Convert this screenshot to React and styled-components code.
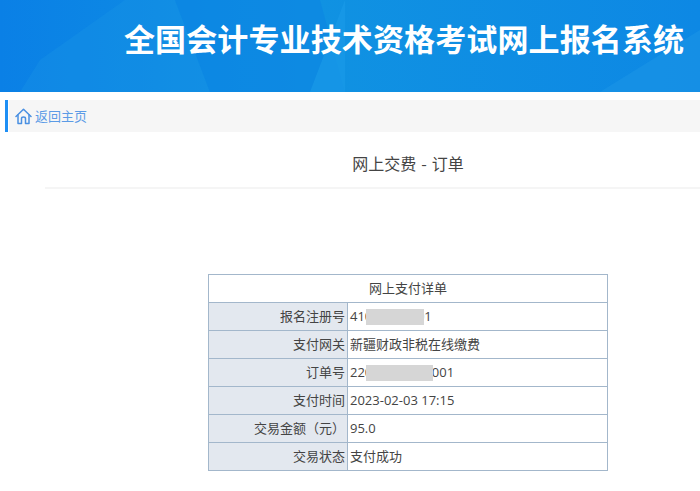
import React from "react";
import styled, { createGlobalStyle } from "styled-components";

const Global = createGlobalStyle`
  html, body { margin: 0; padding: 0; background: #fff; }
  body { font-family: "Open Sans", "Noto Sans CJK SC", sans-serif; color: #444; overflow: hidden; }
`;
const Page = styled.div`
  width: 700px;
  height: 491px;
  overflow: hidden;
`;
const Banner = styled.header`
  position: relative;
  height: 92px;
  box-sizing: border-box;
  padding: 18px 0 0 124px;
  overflow: hidden;
  background: #0d88e4;
`;
const BannerArt = styled.svg`
  position: absolute;
  inset: 0;
`;
const Title = styled.h1`
  position: relative;
  margin: 0;
  font: 700 31px/40px "Noto Sans CJK SC", sans-serif;
  letter-spacing: 0.12px;
  color: #fff;
  white-space: nowrap;
`;
const Crumb = styled.nav`
  display: flex;
  align-items: center;
  height: 32px;
  margin: 8px 0 0 5px;
  border-left: 3px solid #1e8ff5;
  background: linear-gradient(to right, #fff 1px, #f6f6f6 1px);
  padding-left: 7px;
  gap: 3px;
`;
const BackLink = styled.a`
  font: 400 13px/32px "Noto Sans CJK SC", sans-serif;
  color: #5b9be6;
  text-decoration: none;
`;
const PageHead = styled.div`
  margin-left: 45px;
  width: 726px;
  height: 57px;
  box-sizing: border-box;
  border-bottom: 2px solid #f5f5f5;
  padding-top: 20px;
  text-align: center;
  font: 400 16px/22px "Noto Sans CJK SC", sans-serif;
  word-spacing: 1.5px;
  color: #444;
`;
const Details = styled.table`
  margin: 85px 0 0 208px;
  width: 400px;
  border-collapse: collapse;
  table-layout: fixed;
  font: 400 13px/18px "Open Sans", "Noto Sans CJK SC", sans-serif;
  color: #444;
`;
const LabelCol = styled.col`
  width: 139px;
`;
const Caption = styled.th`
  height: 25px;
  padding: 0 0 2px;
  font-weight: 400;
  text-align: center;
  border: 1px solid #a3b7cb;
`;
const Label = styled.th`
  height: 25px;
  padding: 0 2px 2px 0;
  background: #e3e8ef;
  font-weight: 400;
  text-align: right;
  border: 1px solid #a3b7cb;
`;
const Value = styled.td`
  position: relative;
  padding: 0 0 2px 2px;
  border: 1px solid #a3b7cb;
  white-space: nowrap;
`;
const Redaction = styled.span`
  position: absolute;
  left: 18px;
  top: 50%;
  width: ${p => p.$w}px;
  height: 16px;
  margin-top: -8px;
  background: #d6d6d6;
`;

const Home = () => (
  <svg width="17" height="17" viewBox="0 0 17 17" fill="none" stroke="#4a90e2" strokeWidth="1.5" strokeLinejoin="round" strokeLinecap="round">
    <path d="M1 8.5 L8.5 1.2 L16 8.5" />
    <path d="M3 7 V15.5 H6.5 V10.5 Q6.5 9 8.5 9 Q10.5 9 10.5 10.5 V15.5 H14 V7" />
  </svg>
);

const rows = [
  ["报名注册号", "41000000001", 58],
  ["支付网关", "新疆财政非税在线缴费"],
  ["订单号", "22000000000001", 67],
  ["支付时间", "2023-02-03 17:15"],
  ["交易金额（元）", "95.0"],
  ["交易状态", "支付成功"],
];

export default function App() {
  return (
    <Page>
      <Global />
      <Banner>
        <BannerArt width="700" height="92" viewBox="0 0 700 92">
          <defs>
            <linearGradient id="b" x1="0" y1="0" x2="1" y2="0">
              <stop offset="0" stopColor="#0a80e6" />
              <stop offset="0.45" stopColor="#1092e2" />
              <stop offset="1" stopColor="#0d88e4" />
            </linearGradient>
          </defs>
          <rect width="700" height="92" fill="url(#b)" />
          <polygon points="40,60 125,0 175,0 210,92 20,92" fill="#1a96e6" opacity=".35" />
          <polygon points="175,0 320,0 345,92 210,92" fill="#0b86e2" opacity=".6" />
          <polygon points="345,0 310,92 345,92" fill="#1a9ae8" opacity=".7" />
          <polygon points="600,92 700,30 700,92" fill="#1a94e6" opacity=".6" />
        </BannerArt>
        <Title>全国会计专业技术资格考试网上报名系统</Title>
      </Banner>
      <Crumb>
        <Home />
        <BackLink>返回主页</BackLink>
      </Crumb>
      <PageHead>网上交费 - 订单</PageHead>
      <Details>
        <colgroup>
          <LabelCol />
          <col />
        </colgroup>
        <tbody>
          <tr><Caption colSpan={2}>网上支付详单</Caption></tr>
          {rows.map(([k, v, w]) => (
            <tr key={k}>
              <Label>{k}</Label>
              <Value>
                {v}
                {w && <Redaction $w={w} />}
              </Value>
            </tr>
          ))}
        </tbody>
      </Details>
    </Page>
  );
}
